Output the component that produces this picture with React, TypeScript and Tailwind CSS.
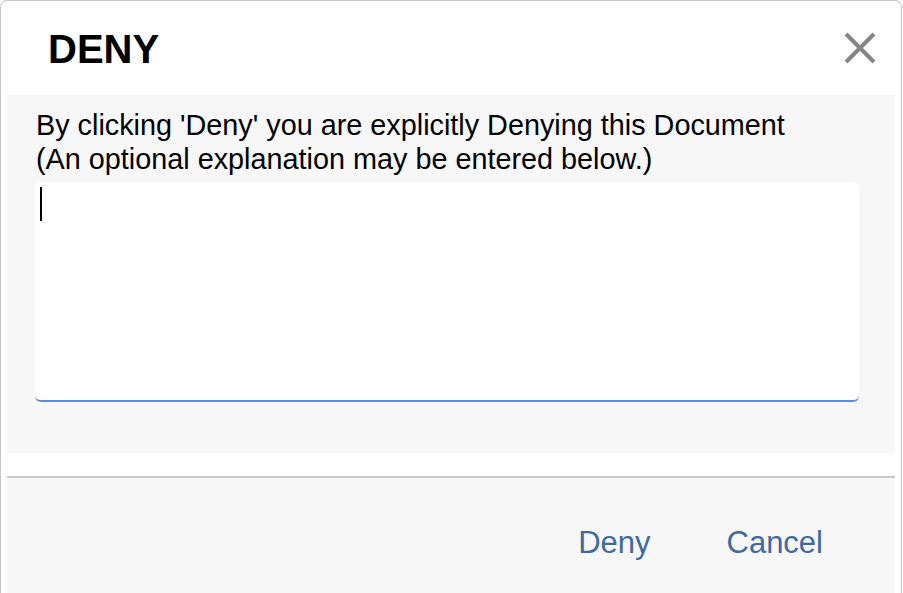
const font = { fontFamily: '"Liberation Sans", Arial, sans-serif' };

const CloseIcon = () => (
  <svg width="32" height="32" viewBox="0 0 32 32" className="text-[#858585]">
    <path d="M2 2 L30 30 M30 2 L2 30" stroke="currentColor" strokeWidth="4" fill="none" />
  </svg>
);

export default function App() {
  return (
    <div className="w-[903px] h-[593px] bg-white overflow-hidden" style={font}>
      <div className="w-[902px] h-[593px] flex flex-col border-x border-t border-[#c6c6c6] rounded-t-[7px] bg-white">
        {/* header */}
        <div className="h-[94px] flex items-start justify-between pl-[47px] pr-[25px] shrink-0">
          <h1 className="mt-[28px] text-[40px] leading-none font-bold text-black">DENY</h1>
          <button className="mt-[31px]" aria-label="Close">
            <CloseIcon />
          </button>
        </div>

        {/* body */}
        <div className="mx-[6px] bg-[#f7f7f8] pt-[13px] pb-[51px] pl-[28px] pr-[36px] shrink-0">
          <p className="text-[28.8px] leading-[34px] text-black pl-px whitespace-nowrap">
            By clicking 'Deny' you are explicitly Denying this Document
            <br />
            (An optional explanation may be entered below.)
          </p>
          <div className="mt-[6px] w-[824px] h-[220px] bg-white rounded-[6px] border-b-2 border-[#5b8fd2] pl-[5px] pt-[5px]">
            <span className="inline-block w-[2px] h-[34px] bg-black" />
          </div>
        </div>

        <div className="h-[23px] shrink-0" />

        {/* footer */}
        <div className="mx-[6px] flex-1 border-t-2 border-[#c8c8c8] bg-[#f7f7f8] flex justify-end items-start gap-[76px] pr-[72px] pt-[49px]">
          <button className="text-[31px] leading-none text-[#3f6aa1]">Deny</button>
          <button className="text-[31px] leading-none text-[#3f6aa1]">Cancel</button>
        </div>
      </div>
    </div>
  );
}
